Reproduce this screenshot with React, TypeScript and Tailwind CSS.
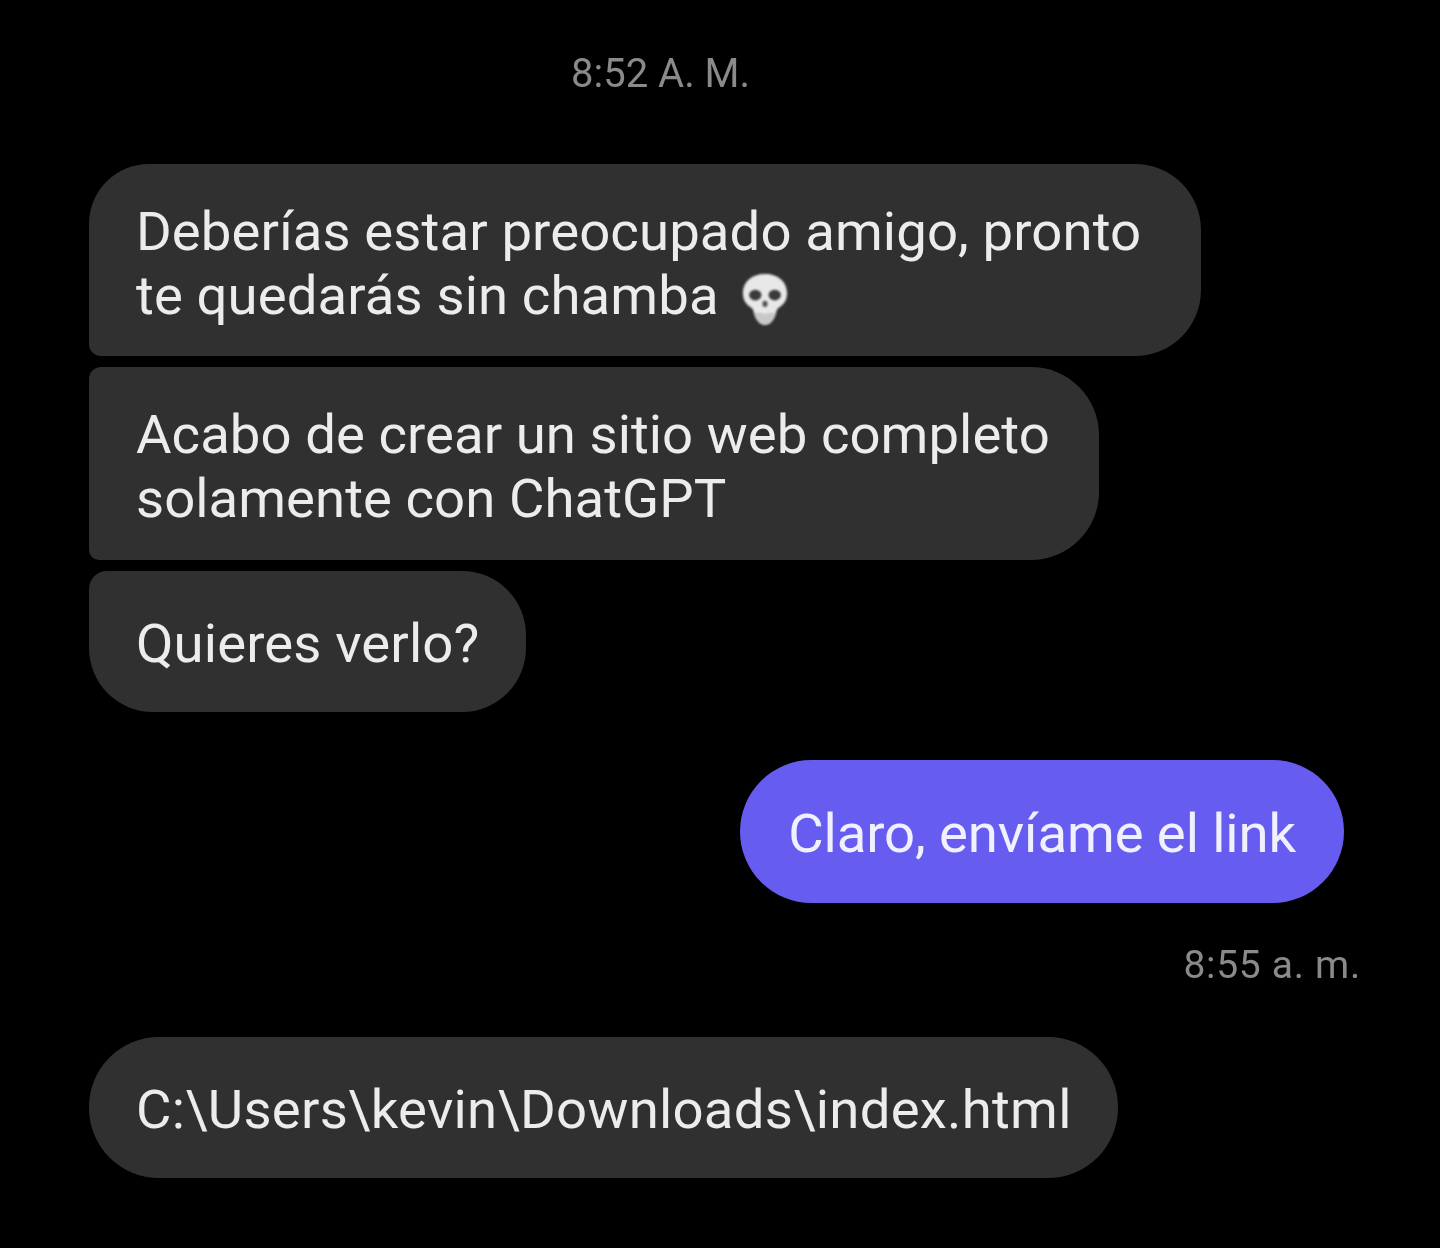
import type { ReactNode } from "react";

function Bubble({ children, className }: { children: ReactNode; className: string }) {
  return (
    <div className={`w-fit whitespace-nowrap bg-[#303030] text-[#ececec] text-[54.5px] leading-[64px] ${className}`}>
      {children}
    </div>
  );
}

function Skull() {
  return (
    <svg viewBox="0 0 56 60" className="inline-block w-[50px] h-[53px] ml-[21px] align-[-12px] blur-[0.8px]">
      <path d="M28 1C13 1 3 10 3 23c0 8 4 13 9 16 2 1 3 3 3 5 2 9 7 15 13 15s11-6 13-15c0-2 1-4 3-5 5-3 9-8 9-16C53 10 43 1 28 1Z" fill="#e8e8e8" />
      <path d="M16 44c3 2 7 1 12 2 5-1 9 0 12-2-1 8-6 14-12 14s-11-6-12-14Z" fill="#c8c8c8" />
      <ellipse cx="17" cy="25" rx="7" ry="6" fill="#3a3a3a" />
      <ellipse cx="39" cy="25" rx="7" ry="6" fill="#3a3a3a" />
      <ellipse cx="28" cy="35" rx="3" ry="3.5" fill="#555" />
    </svg>
  );
}

export default function App() {
  return (
    <div className="w-[1440px] h-[1248px] bg-black overflow-hidden font-['Roboto',sans-serif] flex flex-col">
      <div className="pt-[52px] pl-[571px] text-[40px] leading-[44px] text-[#8a8a8a] blur-[0.4px]">8:52 A. M.</div>

      <div className="mt-[68px] pl-[89px] flex flex-col gap-[11px]">
        <Bubble className="tracking-[0.1px] pl-[47px] pr-[60px] pt-[35px] pb-[29px] rounded-tl-[60px] rounded-tr-[66px] rounded-br-[66px] rounded-bl-[12px]">
          <span className="blur-[0.4px] block">
            Deberías estar preocupado amigo, pronto
            <br />
            te quedarás sin chamba
            <Skull />
          </span>
        </Bubble>
        <Bubble className="tracking-[0.04px] pl-[47px] pr-[49px] pt-[35px] pb-[30px] rounded-tl-[12px] rounded-tr-[68px] rounded-br-[68px] rounded-bl-[10px]">
          <span className="blur-[0.4px] block">
            Acabo de crear un sitio web completo
            <br />
            solamente con ChatGPT
          </span>
        </Bubble>
        <Bubble className="tracking-[0.12px] pl-[47px] pr-[47px] pt-[40px] pb-[37px] rounded-tl-[18px] rounded-tr-[64px] rounded-br-[64px] rounded-bl-[64px]">
          <span className="blur-[0.4px] block">Quieres verlo?</span>
        </Bubble>
      </div>

      <div className="mt-[48px] pr-[96px] flex flex-col items-end">
        <div className="w-fit whitespace-nowrap bg-[#675cf0] text-[#f1f0ff] text-[54.5px] leading-[64px] tracking-[-0.11px] px-[48px] pt-[41px] pb-[38px] rounded-[72px]">
          <span className="blur-[0.4px] block">Claro, envíame el link</span>
        </div>
      </div>
      <div className="mt-[40px] pr-[79px] text-right text-[39px] leading-[44px] tracking-[0.7px] text-[#8a8a8a]">
        <span className="blur-[0.5px] block">8:55 a. m.</span>
      </div>

      <div className="mt-[50px] pl-[89px]">
        <Bubble className="tracking-[0.26px] pl-[47px] pr-[46px] pt-[40px] pb-[37px] rounded-[70px]">
          <span className="blur-[0.4px] block">C:\Users\kevin\Downloads\index.html</span>
        </Bubble>
      </div>
    </div>
  );
}
